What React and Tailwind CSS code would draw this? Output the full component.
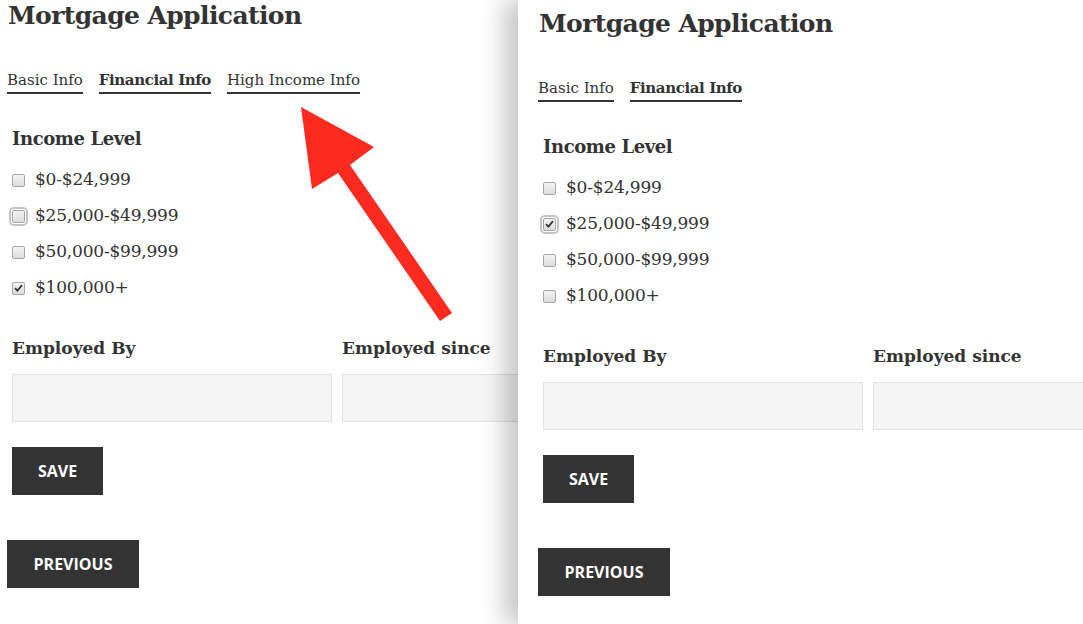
import React from 'react';

const serif = { fontFamily: '"DejaVu Serif", "Liberation Serif", serif' };
const sans = { fontFamily: '"Open Sans", "Liberation Sans", sans-serif' };

const levels = ['$0-$24,999', '$25,000-$49,999', '$50,000-$99,999', '$100,000+'];

const Box = ({ checked, focused }) => (
  <span
    className={
      'relative flex h-[13px] w-[13px] items-center justify-center rounded-[2px] border border-[#a6a6a6] bg-gradient-to-b from-[#f4f4f4] to-[#dcdcdc] ' +
      (focused ? 'outline-2 outline-offset-1 outline-[#c4c4c4]' : '')
    }
  >
    {checked && (
      <svg width="9" height="8" viewBox="0 0 9 8">
        <path d="M1 4.2 L3.4 6.6 L8 1.2" fill="none" stroke="#333" strokeWidth="1.8" />
      </svg>
    )}
  </span>
);

const Form = ({ checkedIndex, focusIndex, showHighIncome }) => (
  <div className="text-[#333]" style={serif}>
    <h1 className="text-[25px] font-bold leading-[32px] tracking-[-0.6px]">Mortgage Application</h1>
    <div className="mt-[38px] ml-[-1px] flex gap-[16px] text-[15px] leading-[20px]">
      <span className="border-b-2 border-[#333] pb-[2px]">Basic Info</span>
      <span className="border-b-2 border-[#333] pb-[2px] font-bold tracking-[-0.4px]">Financial Info</span>
      {showHighIncome && <span className="border-b-2 border-[#333] pb-[2px]">High Income Info</span>}
    </div>
    <div className="ml-[4px]">
      <h2 className="mt-[32px] text-[18px] font-bold leading-[26px] tracking-[-0.4px]">Income Level</h2>
      <div className="mt-[17px] flex flex-col gap-[14px]">
        {levels.map((l, i) => (
          <label key={l} className="flex h-[22px] items-center gap-[10px] text-[17px] tracking-[-0.2px]">
            <Box checked={i === checkedIndex} focused={i === focusIndex} />
            <span>{l}</span>
          </label>
        ))}
      </div>
      <div className="mt-[37px] flex gap-[10px]">
        <div className="w-[320px] shrink-0">
          <div className="text-[17px] font-bold leading-[24px]">Employed By</div>
          <div className="mt-[14px] h-[48px] border border-[#e2e2e2] bg-[#f5f5f5]" />
        </div>
        <div className="w-[320px] shrink-0">
          <div className="text-[17px] font-bold leading-[24px]">Employed since</div>
          <div className="mt-[14px] h-[48px] border border-[#e2e2e2] bg-[#f5f5f5]" />
        </div>
      </div>
      <button
        className="mt-[25px] flex h-[48px] w-[91px] items-center justify-center bg-[#333] text-[16px] font-bold uppercase text-white"
        style={sans}
      >
        Save
      </button>
    </div>
    <button
      className="mt-[45px] ml-[-1px] flex h-[48px] w-[132px] items-center justify-center bg-[#333] text-[16px] font-bold uppercase text-white"
      style={sans}
    >
      Previous
    </button>
  </div>
);

export default function App() {
  return (
    <div className="relative h-[624px] w-[1083px] overflow-hidden bg-white">
      <div className="pl-[8px]">
        <Form checkedIndex={3} focusIndex={1} showHighIncome />
      </div>
      <svg className="absolute left-0 top-0" width="520" height="340" viewBox="0 0 520 340">
        <polygon
          points="301,107 374,147 350,165 452,313 440,321 338,173 312,189"
          fill="#fd2a20"
        />
      </svg>
      <div className="absolute inset-y-0 left-[518px] right-0 overflow-hidden bg-white pl-[21px] pt-[8px] shadow-[-14px_0_22px_rgba(0,0,0,0.22)]">
        <Form checkedIndex={1} focusIndex={1} showHighIncome={false} />
      </div>
    </div>
  );
}
